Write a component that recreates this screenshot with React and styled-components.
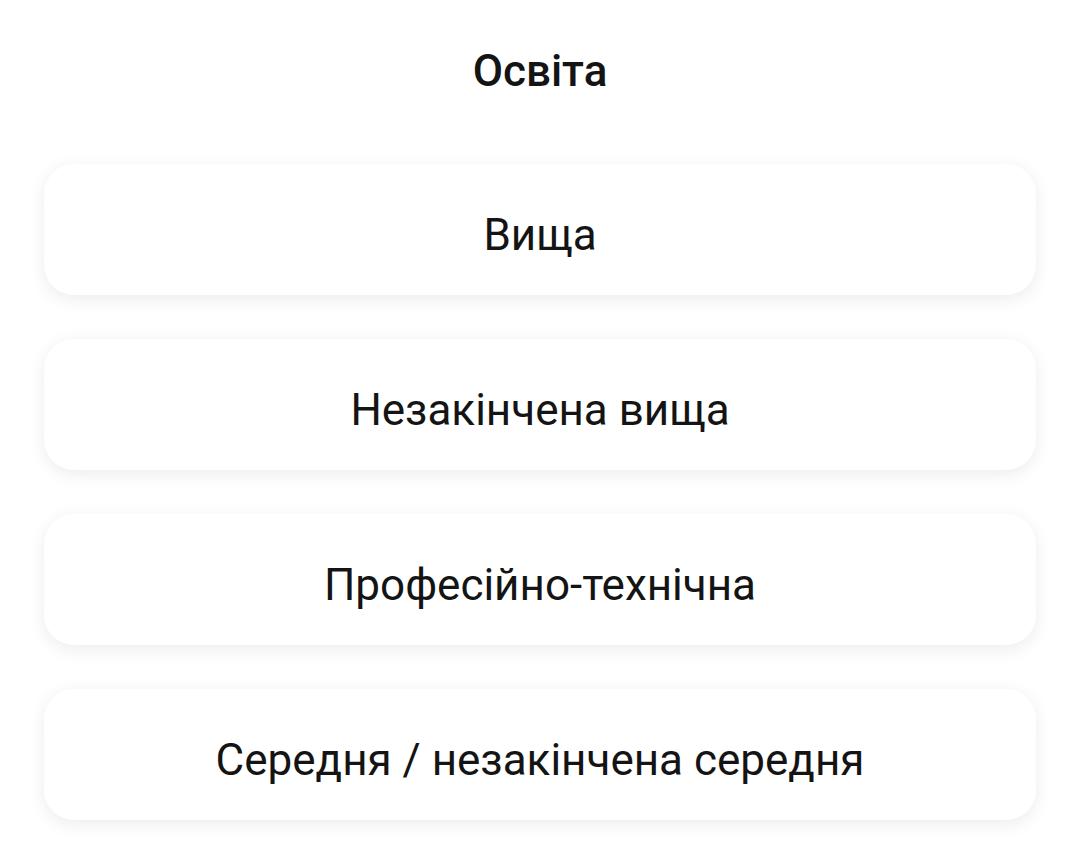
import React from "react";
import styled, { createGlobalStyle } from "styled-components";

const Global = createGlobalStyle`
  body {
    margin: 0;
    background: #ffffff;
    font-family: Roboto, "Noto Sans", sans-serif;
    color: #141414;
  }
`;

const Page = styled.div`
  display: flex;
  flex-direction: column;
  padding: 0 44px 23px;
`;

const Title = styled.h2`
  margin: 0;
  height: 164px;
  padding-top: 45px;
  box-sizing: border-box;
  text-align: center;
  font-size: 44px;
  font-weight: 500;
  line-height: 52px;
`;

const List = styled.div`
  display: flex;
  flex-direction: column;
  gap: 44px;
`;

const Option = styled.div`
  height: 131px;
  display: flex;
  align-items: center;
  justify-content: center;
  background: #fff;
  border-radius: 30px;
  box-shadow: 0 4px 18px rgba(0, 0, 0, 0.08);
  font-size: 44px;
  line-height: 1;
  padding-top: 10px;
  box-sizing: border-box;
`;

const options = [
  "Вища",
  "Незакінчена вища",
  "Професійно-технічна",
  "Середня / незакінчена середня",
];

export default function App() {
  return (
    <>
      <Global />
      <Page>
        <Title>Освіта</Title>
        <List>
          {options.map((o) => (
            <Option key={o}>{o}</Option>
          ))}
        </List>
      </Page>
    </>
  );
}
